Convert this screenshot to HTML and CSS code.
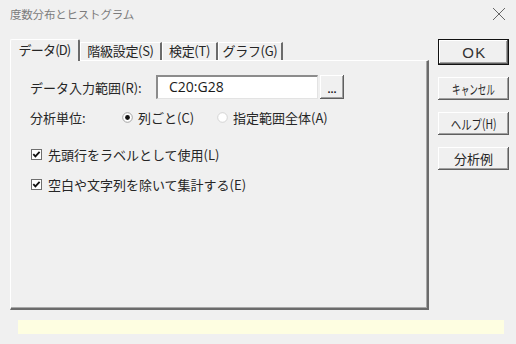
FILE: index.html
```html
<!DOCTYPE html>
<html lang="ja">
<head>
<meta charset="utf-8">
<title>度数分布とヒストグラム</title>
<link rel="stylesheet" href="styles.css">
</head>
<body>
<div class="window">
  <div class="titlebar">
    <span class="title">度数分布とヒストグラム</span>
    <svg class="close" width="14" height="14" viewBox="0 0 14 14"><path d="M1 1L13 13M13 1L1 13" stroke="#666" stroke-width="1" fill="none"/></svg>
  </div>
  <div class="main">
    <div class="left">
      <div class="tabs">
        <div class="tab tab-active t1">データ(D)</div>
        <div class="tab t2">階級設定(S)</div>
        <div class="tab t3">検定(T)</div>
        <div class="tab t4">グラフ(G)</div>
      </div>
      <div class="panel">
        <div class="row row-range">
          <span class="label label-range">データ入力範囲(R):</span>
          <div class="input">C20:G28</div>
          <div class="btn btn-dots">...</div>
        </div>
        <div class="row row-unit">
          <span class="label label-unit">分析単位:</span>
          <div class="radio-opt opt1">
            <svg class="radio" width="11" height="11" viewBox="0 0 11 11"><circle cx="5.5" cy="5.5" r="4.8" fill="#fff" stroke="#9a9a9a" stroke-width="0.9"/><circle cx="5.5" cy="5.5" r="2.4" fill="#111"/></svg>
            <span>列ごと(C)</span>
          </div>
          <div class="radio-opt">
            <svg class="radio" width="11" height="11" viewBox="0 0 11 11"><circle cx="5.5" cy="5.5" r="4.8" fill="#fff" stroke="#d0d0d0" stroke-width="0.9"/></svg>
            <span>指定範囲全体(A)</span>
          </div>
        </div>
        <div class="row row-check c1">
          <svg class="check" width="11" height="11" viewBox="0 0 11 11"><rect x="0.5" y="0.5" width="10" height="10" fill="#fff" stroke="#6e6e6e"/><path d="M2.3 5.2L4.4 7.4L8.6 2.9" stroke="#111" stroke-width="1.8" fill="none"/></svg>
          <span>先頭行をラベルとして使用(L)</span>
        </div>
        <div class="row row-check c2">
          <svg class="check" width="11" height="11" viewBox="0 0 11 11"><rect x="0.5" y="0.5" width="10" height="10" fill="#fff" stroke="#6e6e6e"/><path d="M2.3 5.2L4.4 7.4L8.6 2.9" stroke="#111" stroke-width="1.8" fill="none"/></svg>
          <span>空白や文字列を除いて集計する(E)</span>
        </div>
      </div>
    </div>
    <div class="side">
      <div class="btn btn-default">OK</div>
      <div class="btn btn-side"><span class="narrow n1">キャンセル</span></div>
      <div class="btn btn-side"><span class="narrow n2">ヘルプ(H)</span></div>
      <div class="btn btn-side">分析例</div>
    </div>
  </div>
  <div class="status"></div>
</div>
</body>
</html>
```
FILE: styles.css
```css
* { box-sizing: border-box; }
html, body { margin: 0; padding: 0; }
body {
  width: 516px;
  height: 344px;
  background: #f0f0f0;
  font-family: "Noto Sans CJK JP", "Noto Sans", sans-serif;
  font-size: 13px;
  color: #262626;
  overflow: hidden;
}
.window { width: 516px; height: 344px; }
.titlebar {
  height: 28px;
  display: flex;
  align-items: center;
  justify-content: space-between;
  padding: 0 10px 0 10px;
}
.title {
  font-size: 11.5px;
  color: #7c7c7c;
  letter-spacing: -0.2px;
}
.main {
  display: flex;
  padding-left: 10px;
  margin-top: 11px;
}
.left { width: 419px; }
.tabs {
  display: flex;
  align-items: flex-end;
  height: 21px;
}
.tab {
  height: 18px;
  line-height: 16px;
  text-align: center;
  border-top: 1px solid #fff;
  border-left: 1px solid #fff;
  border-right: 2px solid #6b6b6b;
  font-size: 13px;
  letter-spacing: -0.3px;
  white-space: nowrap;
}
.tab-active {
  height: 22px;
  line-height: 19px;
  margin-bottom: -1px;
  position: relative;
  z-index: 1;
  background: #f0f0f0;
  border-radius: 2px 2px 0 0;
  letter-spacing: -0.8px;
}
.t1 { width: 70px; }
.t2 { width: 82px; }
.t3 { width: 56px; }
.t4 { width: 65px; }
.panel {
  height: 250px;
  border-top: 1px solid #fff;
  border-left: 1px solid #fff;
  border-right: 2px solid #6b6b6b;
  border-bottom: 2px solid #6b6b6b;
  box-shadow: inset -1px -1px 0 #a8a8a8;
  padding-left: 19px;
  padding-top: 14px;
}
.row { display: flex; align-items: center; }
.row-range { height: 24px; }
.label-range { width: 126px; }
.input {
  width: 162px;
  height: 24px;
  background: #fff;
  border-top: 2px solid #8c8c8c;
  border-left: 2px solid #8c8c8c;
  border-right: 1px solid #e3e3e3;
  border-bottom: 1px solid #e3e3e3;
  padding-left: 11px;
  font-family: "Open Sans", "Noto Sans", sans-serif;
  font-size: 14px;
  line-height: 20px;
  color: #1a1a1a;
}
.btn {
  background: #f0f0f0;
  box-shadow: inset -1px -1px 0 #5f5f5f, inset 1px 1px 0 #fff, inset -2px -2px 0 #a0a0a0;
  display: flex;
  align-items: center;
  justify-content: center;
  color: #262626;
}
.btn-dots {
  width: 24px;
  height: 24px;
  margin-left: 2px;
  font-family: "Liberation Sans", sans-serif;
  font-size: 11px;
  font-weight: bold;
  line-height: 1;
  padding-top: 4px;
}
.row-unit { height: 18px; margin-top: 9px; }
.label-unit { width: 92px; }
.radio-opt { display: flex; align-items: center; gap: 5px; }
.opt1 { width: 95px; }
.row-check { height: 18px; gap: 6px; padding-left: 1px; }
.c1 { margin-top: 19px; }
.c2 { margin-top: 12px; }
.side {
  margin-left: 9px;
  width: 71px;
  display: flex;
  flex-direction: column;
  gap: 12px;
}
.btn-default {
  height: 26px;
  border: 1px solid #111;
  font-family: "Liberation Sans", sans-serif;
  font-size: 15px;
  letter-spacing: 1.5px;
  padding-left: 2px;
  color: #333;
}
.btn-side { height: 23px; font-size: 13px; }
.narrow { display: inline-block; white-space: nowrap; }
.n1 { transform: scaleX(0.66); }
.n2 { transform: scaleX(0.8); }
.status {
  margin: 10px 12px 0 18px;
  height: 14px;
  background: #fefee1;
}
```
